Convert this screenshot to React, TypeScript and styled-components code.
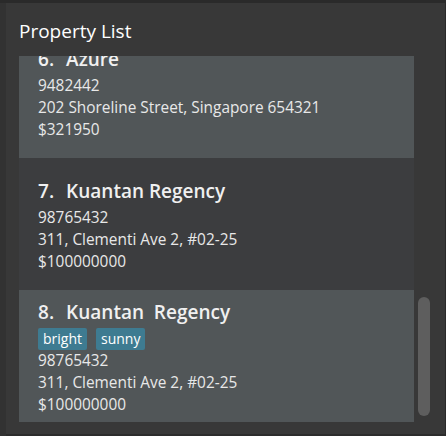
import React from "react";
import styled, { createGlobalStyle } from "styled-components";

const GlobalStyle = createGlobalStyle`
  html, body { margin: 0; padding: 0; background: #2f2f2f; }
  body { font-family: "Open Sans", "Noto Sans", sans-serif; }
`;

const Frame = styled.div`
  width: 446px;
  height: 436px;
  box-sizing: border-box;
  border-top: 3px solid #2a2a2a;
  padding-left: 6px;
  background: #323232;
  display: flex;
`;

const Panel = styled.div`
  flex: 1;
  display: flex;
  flex-direction: column;
  background: #383838;
  border-right: 1px solid #2a2a2a;
  border-bottom: 2px solid #2c2c2c;
  padding: 0 9px 0 13px;
`;

const Header = styled.div`
  height: 53px;
  box-sizing: border-box;
  padding-top: 15px;
  font-size: 19px;
  line-height: 26px;
  color: #ffffff;
`;

const ListArea = styled.div`
  display: flex;
  height: 366px;
`;

const Viewport = styled.div`
  width: 395px;
  overflow: hidden;
`;

const ListInner = styled.div`
  margin-top: -30px;
  display: flex;
  flex-direction: column;
`;

const Card = styled.div<{ $alt: boolean }>`
  height: 132px;
  box-sizing: border-box;
  padding: 2px 19px 0;
  display: flex;
  flex-direction: column;
  justify-content: center;
  background: ${(p) => (p.$alt ? "#3c3d3f" : "#515658")};
  color: #e8e8e8;
`;

const TitleRow = styled.div`
  display: flex;
  gap: 12px;
  font-size: 19px;
  font-weight: 600;
  line-height: 28px;
  margin-bottom: 2px;
  color: #f0f0f0;
  white-space: pre;
`;

const Tags = styled.div`
  display: flex;
  gap: 9px;
  margin: 0;
`;

const Tag = styled.span`
  height: 22px;
  line-height: 22px;
  padding: 0 5px;
  border-radius: 2px;
  background: #3e7b91;
  color: #ffffff;
  font-size: 14px;
`;

const Detail = styled.div`
  font-size: 15.4px;
  line-height: 22px;
  white-space: pre;
`;

const ScrollTrack = styled.div`
  width: 20px;
  box-sizing: border-box;
  padding: 0 4px 6px;
  display: flex;
  flex-direction: column;
  justify-content: flex-end;
`;

const Thumb = styled.div`
  height: 119px;
  border-radius: 6px;
  background: #5e5e5e;
`;

type Property = {
  id: number;
  name: string;
  tags: string[];
  phone: string;
  address: string;
  price: string;
};

const properties: Property[] = [
  { id: 6, name: "Azure", tags: [], phone: "9482442", address: "202 Shoreline Street, Singapore 654321", price: "$321950" },
  { id: 7, name: "Kuantan Regency", tags: [], phone: "98765432", address: "311, Clementi Ave 2, #02-25", price: "$100000000" },
  { id: 8, name: "Kuantan  Regency", tags: ["bright", "sunny"], phone: "98765432", address: "311, Clementi Ave 2, #02-25", price: "$100000000" },
];

export default function App() {
  return (
    <>
      <GlobalStyle />
      <Frame>
        <Panel>
          <Header>Property List</Header>
          <ListArea>
            <Viewport>
              <ListInner>
                {properties.map((p) => (
                  <Card key={p.id} $alt={p.id % 2 === 1}>
                    <TitleRow>
                      <span>{p.id}.</span>
                      <span>{p.name}</span>
                    </TitleRow>
                    {p.tags.length > 0 && (
                      <Tags>
                        {p.tags.map((t) => (
                          <Tag key={t}>{t}</Tag>
                        ))}
                      </Tags>
                    )}
                    <Detail>{p.phone}</Detail>
                    <Detail>{p.address}</Detail>
                    <Detail>{p.price}</Detail>
                  </Card>
                ))}
              </ListInner>
            </Viewport>
            <ScrollTrack>
              <Thumb />
            </ScrollTrack>
          </ListArea>
        </Panel>
      </Frame>
    </>
  );
}
